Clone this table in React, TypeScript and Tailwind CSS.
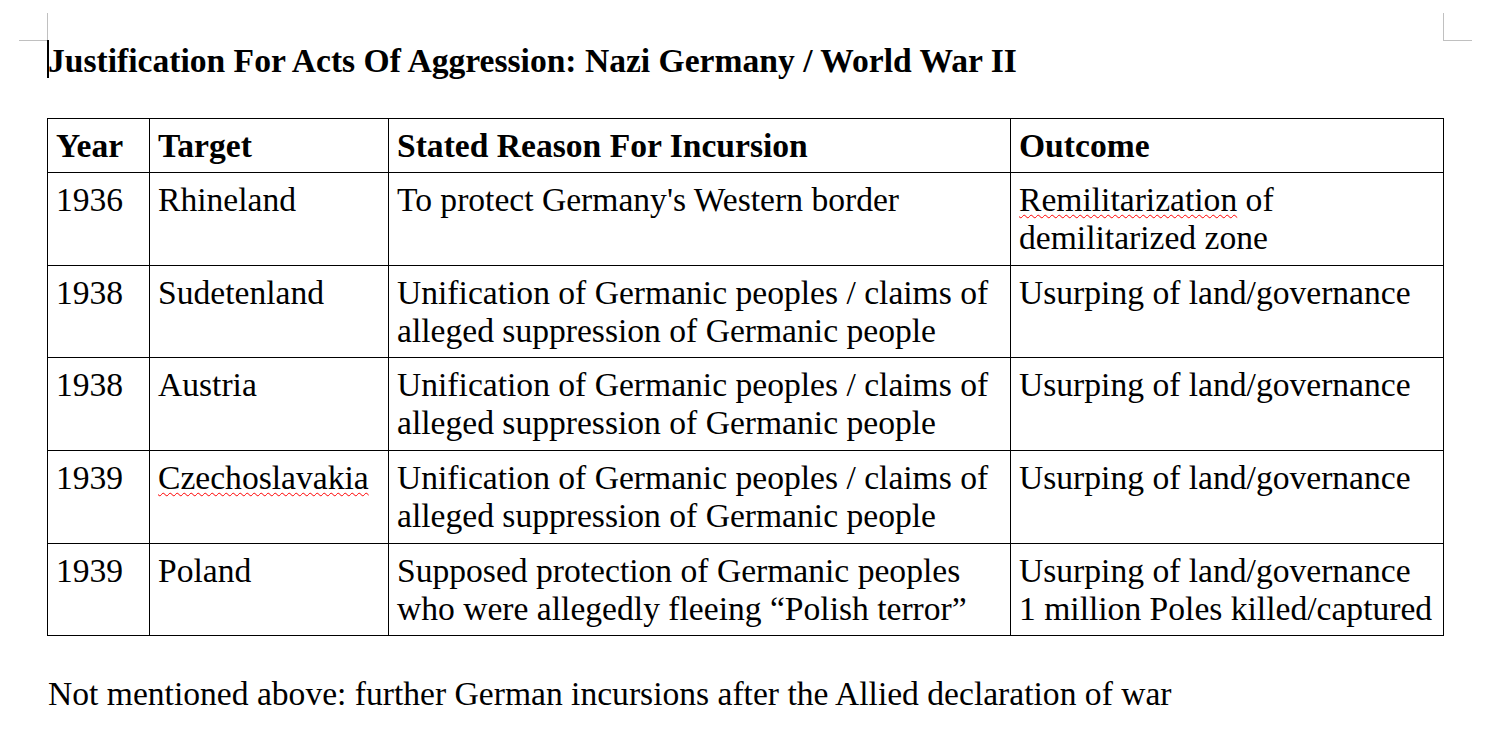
import React from "react";

type Row = {
  year: string;
  target: string;
  reason: string[];
  outcome: React.ReactNode[];
  h: string;
  misspelledTarget?: boolean;
};

const Squiggle = ({ children }: { children: React.ReactNode }) => (
  <span className="underline decoration-wavy decoration-[#ff0000] decoration-1 underline-offset-[3px]">
    {children}
  </span>
);

const unification = [
  "Unification of Germanic peoples / claims of",
  "alleged suppression of Germanic people",
];

const rows: Row[] = [
  {
    year: "1936",
    target: "Rhineland",
    reason: ["To protect Germany's Western border"],
    outcome: [
      <>
        <Squiggle>Remilitarization</Squiggle> of
      </>,
      "demilitarized zone",
    ],
    h: "h-[93px]",
  },
  {
    year: "1938",
    target: "Sudetenland",
    reason: unification,
    outcome: ["Usurping of land/governance"],
    h: "h-[92px]",
  },
  {
    year: "1938",
    target: "Austria",
    reason: unification,
    outcome: ["Usurping of land/governance"],
    h: "h-[93px]",
  },
  {
    year: "1939",
    target: "Czechoslavakia",
    reason: unification,
    outcome: ["Usurping of land/governance"],
    h: "h-[93px]",
    misspelledTarget: true,
  },
  {
    year: "1939",
    target: "Poland",
    reason: [
      "Supposed protection of Germanic peoples",
      "who were allegedly fleeing \u201cPolish terror\u201d",
    ],
    outcome: ["Usurping of land/governance", "1 million Poles killed/captured"],
    h: "h-[92px]",
  },
];

const cell = "border-r border-b border-black pl-[8px] pt-[8px] whitespace-nowrap";

export default function App() {
  return (
    <div
      className="relative w-full h-[753px] bg-white text-black overflow-hidden"
      style={{ fontFamily: '"Liberation Serif", "Times New Roman", serif' }}
    >
      {/* page corner marks */}
      <div className="absolute left-[19px] top-[13px] w-[29px] h-[28px] border-r border-b border-[#c0c0c0]" />
      <div className="absolute left-[1443px] top-[13px] w-[29px] h-[28px] border-l border-b border-[#c0c0c0]" />
      {/* text cursor */}
      <div className="absolute left-[47px] top-[40px] w-[2px] h-[38px] bg-black" />

      <div className="pl-[47px] pt-[42px] text-[33.6px] leading-[38px]">
        <h1 className="pl-[1px] font-bold h-[38px]">
          Justification For Acts Of Aggression: Nazi Germany / World War II
        </h1>

        <div className="mt-[38px] grid grid-cols-[102px_239px_622px_433px] w-fit border-l border-t border-black">
          <div className={`${cell} h-[54px] font-bold`}>Year</div>
          <div className={`${cell} h-[54px] font-bold`}>Target</div>
          <div className={`${cell} h-[54px] font-bold`}>Stated Reason For Incursion</div>
          <div className={`${cell} h-[54px] font-bold`}>Outcome</div>

          {rows.map((r, i) => (
            <React.Fragment key={i}>
              <div className={`${cell} ${r.h}`}>{r.year}</div>
              <div className={`${cell} ${r.h}`}>
                {r.misspelledTarget ? <Squiggle>{r.target}</Squiggle> : r.target}
              </div>
              <div className={`${cell} ${r.h}`}>
                {r.reason.map((line, j) => (
                  <div key={j}>{line}</div>
                ))}
              </div>
              <div className={`${cell} ${r.h}`}>
                {r.outcome.map((line, j) => (
                  <div key={j}>{line}</div>
                ))}
              </div>
            </React.Fragment>
          ))}
        </div>

        <p className="mt-[39px] pl-[1px]">
          Not mentioned above: further German incursions after the Allied declaration of war
        </p>
      </div>
    </div>
  );
}
